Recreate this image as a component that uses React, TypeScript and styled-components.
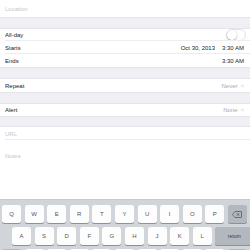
import React from 'react';
import styled, { createGlobalStyle } from 'styled-components';

const GlobalStyle = createGlobalStyle`
  html, body {
    margin: 0;
    padding: 0;
    background: #ffffff;
    overflow: hidden;
  }
  body {
    font-family: "Liberation Sans", Arial, Helvetica, sans-serif;
    -webkit-font-smoothing: antialiased;
  }
`;

// --- Form ---
const Screen = styled.div`
  width: 250px;
  height: 250px;
  display: flex;
  flex-direction: column;
  overflow: hidden;
  background: #ffffff;
`;

const Band = styled.div<{ $h: number }>`
  height: ${p => p.$h}px;
  flex-shrink: 0;
  background: #efeff4;
  border-top: 1px solid #e4e4e9;
  border-bottom: 1px solid #e4e4e9;
  box-sizing: border-box;
`;

const Row = styled.div<{ $h: number; $line?: boolean }>`
  height: ${p => p.$h}px;
  flex-shrink: 0;
  display: flex;
  align-items: center;
  justify-content: space-between;
  padding: 0 6px 0 5px;
  box-sizing: border-box;
  background: #ffffff;
  position: relative;

  ${p => p.$line && `
    &:after {
      content: '';
      position: absolute;
      left: 5px;
      right: 0;
      bottom: 0;
      height: 1px;
      background: #ededf1;
    }
  `}
`;

const Label = styled.span`
  font-size: 6px;
  color: #222222;
`;

const Placeholder = styled.span`
  font-size: 6px;
  color: #c6c6cb;
`;

const Value = styled.span`
  font-size: 6px;
  color: #222222;
  display: flex;
  gap: 7px;
`;

const Detail = styled.span`
  font-size: 6px;
  color: #a9a9ae;
  display: flex;
  align-items: center;
  gap: 3px;
`;

const Chevron = styled.span`
  font-size: 6px;
  color: #c7c7cc;
`;

const Switch = styled.div`
  width: 20px;
  height: 12px;
  border-radius: 6px;
  border: 1px solid #e3e3e8;
  box-sizing: border-box;
  background: #ffffff;
  position: relative;
  margin-right: -2px;
`;

const Knob = styled.div`
  position: absolute;
  left: 0;
  top: 0;
  width: 10px;
  height: 10px;
  border-radius: 50%;
  background: #ffffff;
  box-shadow: 0 1px 1.5px rgba(0, 0, 0, 0.25), 0 0 0 0.5px rgba(0, 0, 0, 0.08);
`;

const Notes = styled.div`
  flex: 1;
  padding: 4px 5px 0;
  background: #ffffff;
`;

// --- Keyboard ---
const Keyboard = styled.div`
  height: 51px;
  flex-shrink: 0;
  background: #d1d4d9;
  border-top: 1px solid #c6c9ce;
  padding-top: 5px;
  box-sizing: border-box;
  display: flex;
  flex-direction: column;
  gap: 4px;
`;

const KeyRow = styled.div<{ $indent: number }>`
  display: flex;
  gap: 3.6px;
  padding-left: ${p => p.$indent}px;
`;

const Key = styled.div<{ $w?: number; $dark?: boolean }>`
  width: ${p => p.$w ?? 19}px;
  height: 18px;
  flex-shrink: 0;
  border-radius: 2.5px;
  background: ${p => (p.$dark ? '#b3b8bf' : '#fdfdfd')};
  box-shadow: 0 1px 0 #8e9298;
  display: flex;
  align-items: center;
  justify-content: center;
  font-size: 6px;
  color: #555555;
`;

const SmallKeyText = styled.span`
  font-size: 5px;
  color: #3a3a3a;
`;

const BackspaceIcon = () => (
  <svg width="10" height="7" viewBox="0 0 20 14">
    <path
      d="M6 1 H18 a1 1 0 0 1 1 1 V12 a1 1 0 0 1 -1 1 H6 L1 7 Z"
      fill="none"
      stroke="#4a4a4a"
      strokeWidth="1.4"
      strokeLinejoin="round"
    />
    <path d="M9.5 4.5 L14.5 9.5 M14.5 4.5 L9.5 9.5" stroke="#4a4a4a" strokeWidth="1.4" />
  </svg>
);

const row1 = ['Q', 'W', 'E', 'R', 'T', 'Y', 'U', 'I', 'O', 'P'];
const row2 = ['A', 'S', 'D', 'F', 'G', 'H', 'J', 'K', 'L'];
const row3 = ['z', 'x', 'c', 'v', 'b', 'n', 'm', 'ex', 'qu'];

function App() {
  return (
    <Screen>
      <GlobalStyle />
      <Row $h={17}>
        <Placeholder>Location</Placeholder>
      </Row>
      <Band $h={12} />
      <Row $h={12} $line>
        <Label>All-day</Label>
        <Switch>
          <Knob />
        </Switch>
      </Row>
      <Row $h={13} $line>
        <Label>Starts</Label>
        <Value>
          <span>Oct 30, 2013</span>
          <span>3:30 AM</span>
        </Value>
      </Row>
      <Row $h={13}>
        <Label>Ends</Label>
        <Value>
          <span>3:30 AM</span>
        </Value>
      </Row>
      <Band $h={12} />
      <Row $h={13}>
        <Label>Repeat</Label>
        <Detail>
          Never <Chevron>&gt;</Chevron>
        </Detail>
      </Row>
      <Band $h={12} />
      <Row $h={12}>
        <Label>Alert</Label>
        <Detail>
          None <Chevron>&gt;</Chevron>
        </Detail>
      </Row>
      <Band $h={11} />
      <Row $h={13} $line>
        <Placeholder>URL</Placeholder>
      </Row>
      <Notes>
        <Placeholder>Notes</Placeholder>
      </Notes>
      <Keyboard>
        <KeyRow $indent={2}>
          {row1.map(k => (
            <Key key={k}>{k}</Key>
          ))}
          <Key $dark>
            <BackspaceIcon />
          </Key>
        </KeyRow>
        <KeyRow $indent={12}>
          {row2.map(k => (
            <Key key={k}>{k}</Key>
          ))}
          <Key $dark $w={38}>
            <SmallKeyText>return</SmallKeyText>
          </Key>
        </KeyRow>
        {/* bottom row is only peeking in at the screen edge; its labels are out of view */}
        <KeyRow $indent={2}>
          <Key $dark $w={19} aria-label="shift" />
          {row3.map(k => (
            <Key key={k} aria-label={k} />
          ))}
          <Key $dark aria-label="shift" />
        </KeyRow>
      </Keyboard>
    </Screen>
  );
}

export default App;
